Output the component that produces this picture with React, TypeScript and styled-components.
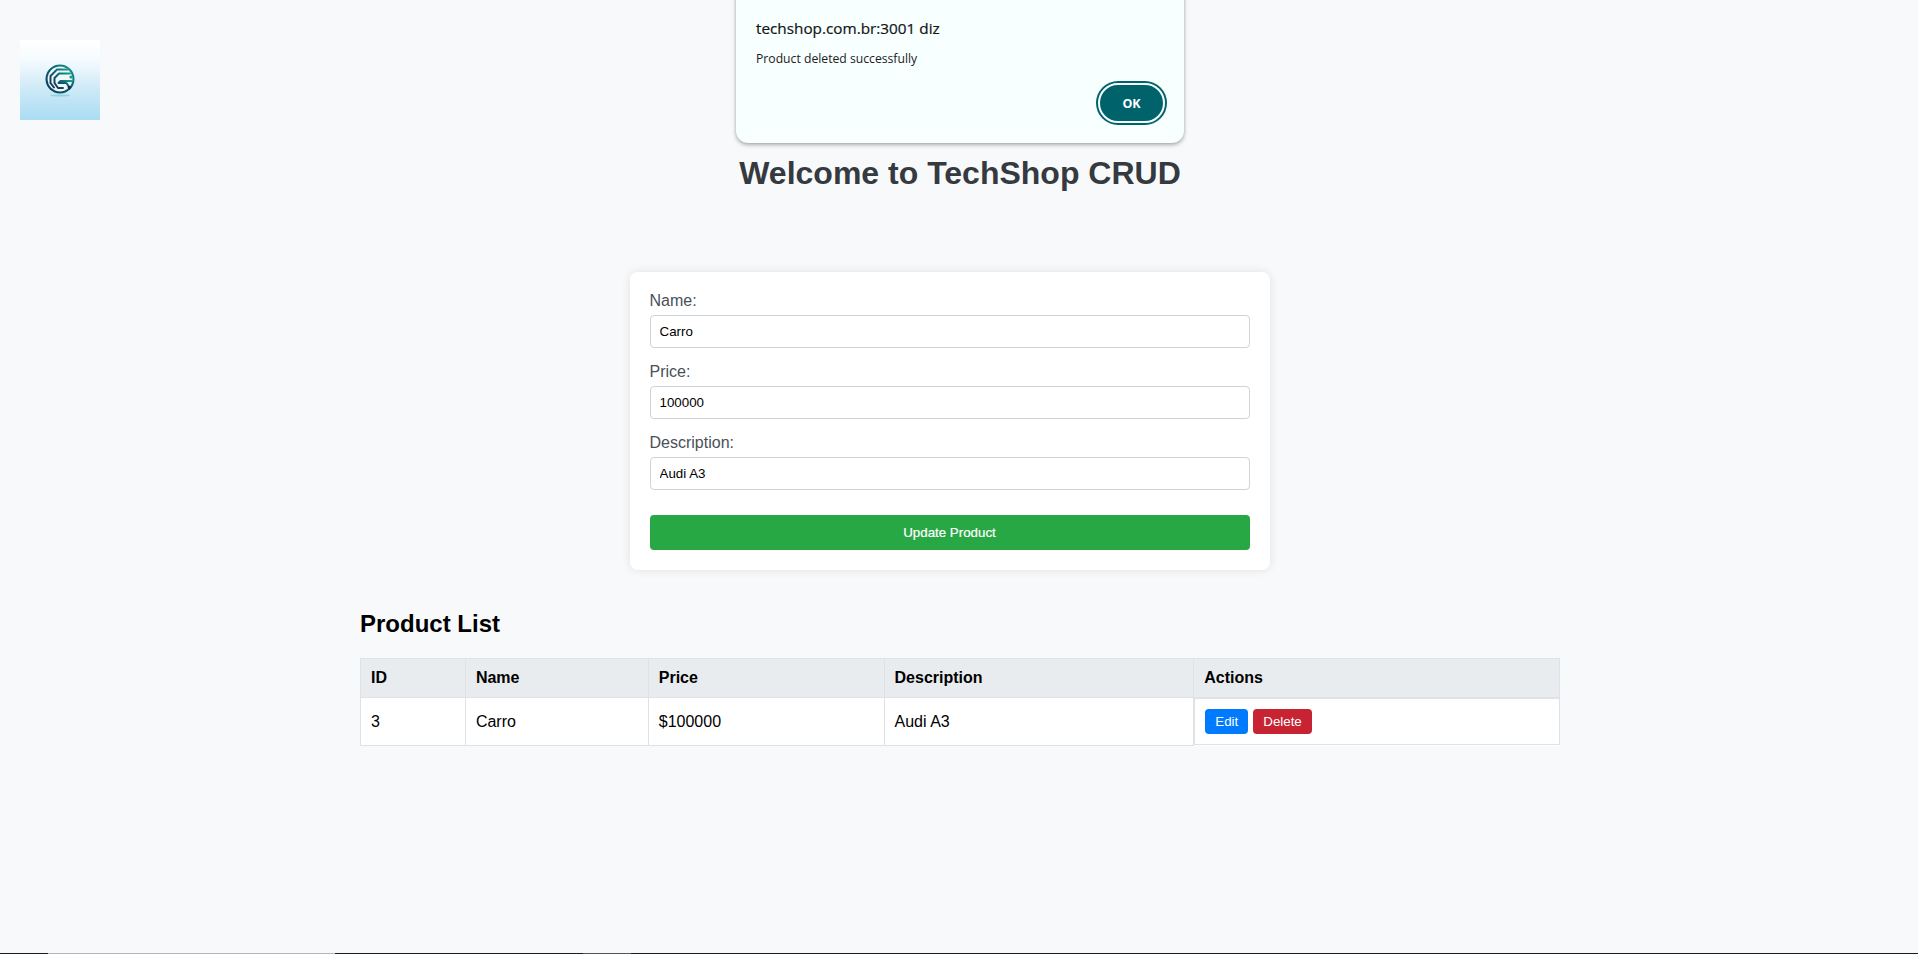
import React from "react";
import styled, { createGlobalStyle } from "styled-components";

const GlobalStyle = createGlobalStyle`
  html, body {
    margin: 0;
    padding: 0;
    height: 100%;
    overflow: hidden;
    background: #f8f9fa;
    font-family: "Liberation Sans", Arial, sans-serif;
  }
`;

const Page = styled.div`
  position: relative;
  box-sizing: border-box;
  height: 954px;
  padding: 40px 358px 0 360px;
  display: flex;
  flex-direction: column;
  align-items: center;
`;

const LogoBox = styled.div`
  position: absolute;
  top: 40px;
  left: 20px;
  width: 80px;
  height: 80px;
  background: linear-gradient(180deg, #ffffff 0%, #f5fbfe 25%, #cfeaf7 60%, #a9dcf2 100%);
  display: flex;
  justify-content: center;
  align-items: center;
`;

const Heading = styled.h1`
  margin: 115px 0 80px;
  font-size: 32px;
  line-height: 37px;
  font-weight: 700;
  color: #343a40;
  text-align: center;
`;

const FormCard = styled.form`
  box-sizing: border-box;
  width: 640px;
  height: 298px;
  margin-right: 21px;
  padding: 20px;
  background: #ffffff;
  border-radius: 8px;
  box-shadow: 0 0 10px rgba(0, 0, 0, 0.1);
  display: flex;
  flex-direction: column;
`;

const Field = styled.div`
  display: flex;
  flex-direction: column;
  margin-bottom: 15px;
`;

const Label = styled.label`
  font-size: 16px;
  line-height: 18px;
  margin-bottom: 5px;
  color: #495057;
`;

const Input = styled.input`
  box-sizing: border-box;
  width: 100%;
  height: 33px;
  padding: 8px 8px 8px 9px;
  border: 1px solid #ced4da;
  border-radius: 4px;
  background: #ffffff;
  color: #000000;
  font-family: "Liberation Sans", Arial, sans-serif;
  font-size: 13.33px;
  outline: none;
`;

const SubmitButton = styled.button`
  height: 35px;
  margin-top: 10px;
  border: none;
  border-radius: 4px;
  background: #28a745;
  color: #ffffff;
  font-family: "Liberation Sans", Arial, sans-serif;
  font-size: 13.33px;
  -webkit-text-stroke: 0.2px #ffffff;
`;

const ListSection = styled.section`
  width: 1200px;
  margin-top: 40px;
`;

const ListTitle = styled.h2`
  margin: 0 0 21px;
  font-size: 24px;
  line-height: 27px;
  font-weight: 700;
  color: #000000;
`;

const Table = styled.table`
  width: 100%;
  border-collapse: collapse;
  background: #ffffff;
  font-size: 16px;
`;

const Th = styled.th<{ $width: number }>`
  box-sizing: border-box;
  width: ${(p) => p.$width}px;
  padding: 10px;
  border: 1px solid #dee2e6;
  background: #e9ecef;
  color: #000000;
  font-weight: 700;
  text-align: left;
`;

const Td = styled.td`
  padding: 11px 10px 9px;
  border: 1px solid #dee2e6;
  color: #000000;
`;

const ActionsCell = styled(Td)`
  display: flex;
  gap: 5px;
  padding: 10px;
`;

const RowButton = styled.button<{ $color: string }>`
  height: 25px;
  padding: 5px 10px;
  border: none;
  border-radius: 4px;
  background: ${(p) => p.$color};
  color: #ffffff;
  font-family: "Liberation Sans", Arial, sans-serif;
  font-size: 13.33px;
`;

const Dialog = styled.div`
  position: absolute;
  top: -12px;
  left: 736px;
  box-sizing: border-box;
  width: 448px;
  height: 155px;
  padding: 30px 19px 0 20px;
  background: #f8ffff;
  border-radius: 12px;
  box-shadow: 0 2px 4px rgba(0, 0, 0, 0.3), 0 0 2px rgba(0, 0, 0, 0.15);
  font-family: "Open Sans", "Noto Sans", sans-serif;
  color: #1c2022;
  display: flex;
  flex-direction: column;
`;

const DialogTitle = styled.div`
  font-size: 15.3px;
  line-height: 21px;
  font-weight: 500;
  color: #101416;
  -webkit-text-stroke: 0.2px #101416;
`;

const DialogMessage = styled.div`
  margin-top: 12px;
  font-size: 12.2px;
  line-height: 16px;
`;

const DialogFooter = styled.div`
  display: flex;
  justify-content: flex-end;
  margin-top: 16px;
`;

const OkButton = styled.button`
  box-sizing: border-box;
  width: 67px;
  height: 40px;
  border: 2px solid #f8ffff;
  border-radius: 20px;
  background: #00626b;
  box-shadow: 0 0 0 2px #00626b;
  color: #ffffff;
  font-family: "Open Sans", "Noto Sans", sans-serif;
  font-size: 12.5px;
  font-weight: 700;
`;

const BottomEdge = styled.div`
  position: absolute;
  left: 0;
  right: 0;
  bottom: 0;
  height: 1px;
  background: linear-gradient(
    90deg,
    #1a1a1a 0 48px,
    #b5b5b5 48px 335px,
    #1a1a1a 335px 583px,
    #555555 583px 631px,
    #1a1a1a 631px 100%
  );
`;

const Logo = () => (
  <svg width="30" height="34" viewBox="0 0 30 34" fill="none">
    <defs>
      <linearGradient id="disc" x1="1" y1="0" x2="0" y2="1">
        <stop offset="0" stopColor="#14a08c" />
        <stop offset="0.45" stopColor="#0f5f74" />
        <stop offset="1" stopColor="#0f3556" />
      </linearGradient>
    </defs>
    <circle cx="15" cy="16" r="14.5" fill="url(#disc)" />
    <circle cx="15" cy="16" r="12.4" fill="#eef8f8" />
    <g stroke="url(#disc)" strokeWidth="2" strokeLinecap="round" strokeLinejoin="round">
      <path d="M23 6.5H12L5.5 13V20L9 24.5" />
      <path d="M25 10.5H14L9.5 15V20L13 25H18" />
      <path d="M15 14H26" />
      <path d="M27 18H15.5L13.5 20H21.5L24 24" />
    </g>
    <circle cx="24.5" cy="24.5" r="1.8" fill="#0f3556" />
    <circle cx="26" cy="14" r="1.6" fill="#14a08c" />
    <ellipse cx="15" cy="32.5" rx="10" ry="1" fill="#8fd3de" />
  </svg>
);

const columns = [
  { label: "ID", width: 105 },
  { label: "Name", width: 183 },
  { label: "Price", width: 236 },
  { label: "Description", width: 310 },
  { label: "Actions", width: 366 },
];

const fields = [
  { label: "Name:", value: "Carro" },
  { label: "Price:", value: "100000" },
  { label: "Description:", value: "Audi A3" },
];

export default function App() {
  return (
    <Page>
      <GlobalStyle />
      <LogoBox>
        <Logo />
      </LogoBox>
      <Heading>Welcome to TechShop CRUD</Heading>
      <FormCard>
        {fields.map((field) => (
          <Field key={field.label}>
            <Label>{field.label}</Label>
            <Input defaultValue={field.value} />
          </Field>
        ))}
        <SubmitButton type="button">Update Product</SubmitButton>
      </FormCard>
      <ListSection>
        <ListTitle>Product List</ListTitle>
        <Table>
          <thead>
            <tr>
              {columns.map((col) => (
                <Th key={col.label} $width={col.width}>
                  {col.label}
                </Th>
              ))}
            </tr>
          </thead>
          <tbody>
            <tr>
              <Td>3</Td>
              <Td>Carro</Td>
              <Td>$100000</Td>
              <Td>Audi A3</Td>
              <ActionsCell>
                <RowButton type="button" $color="#007bff">Edit</RowButton>
                <RowButton type="button" $color="#c82333">Delete</RowButton>
              </ActionsCell>
            </tr>
          </tbody>
        </Table>
      </ListSection>
      <Dialog>
        <DialogTitle>techshop.com.br:3001 diz</DialogTitle>
        <DialogMessage>Product deleted successfully</DialogMessage>
        <DialogFooter>
          <OkButton type="button">OK</OkButton>
        </DialogFooter>
      </Dialog>
      <BottomEdge />
    </Page>
  );
}
